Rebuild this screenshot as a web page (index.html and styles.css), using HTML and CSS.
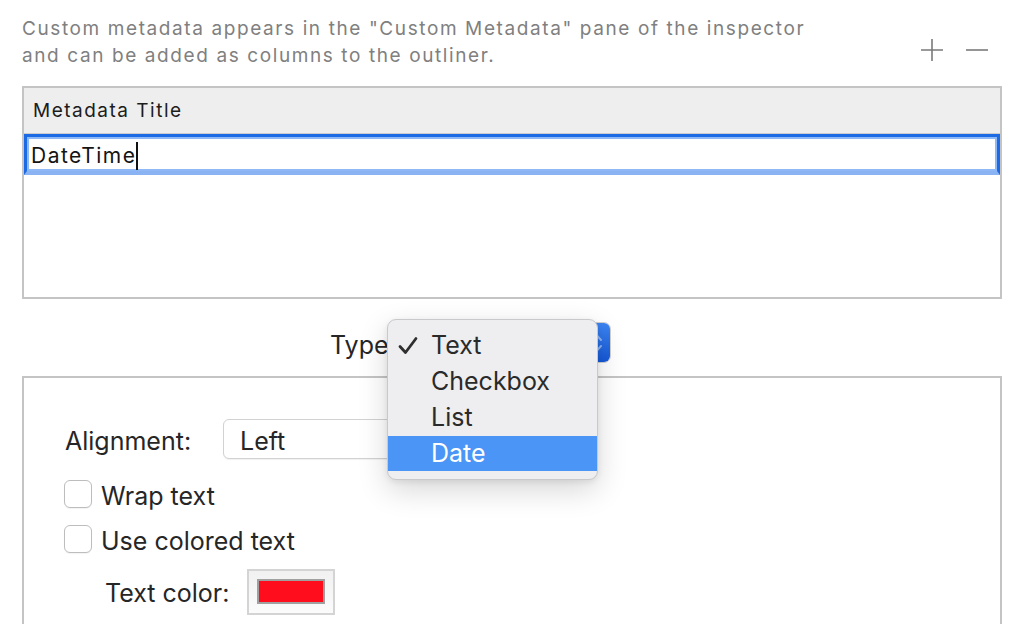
FILE: index.html
```html
<!DOCTYPE html>
<html>
<head>
<meta charset="utf-8">
<link rel="stylesheet" href="styles.css">
</head>
<body>
<div class="page">
  <div class="top">
    <p class="desc">Custom metadata appears in the "Custom Metadata" pane of the inspector<br>and can be added as columns to the outliner.</p>
    <div class="pm">
      <svg class="plus" width="24" height="24" viewBox="0 0 24 24"><path d="M12 1V23M1 12H23" stroke="#7a7a7a" stroke-width="1.6" fill="none"/></svg>
      <svg class="minus" width="24" height="24" viewBox="0 0 24 24"><path d="M1 12H23" stroke="#7a7a7a" stroke-width="1.6" fill="none"/></svg>
    </div>
  </div>

  <div class="table">
    <div class="th">Metadata Title</div>
    <div class="field"><span class="field-text">DateTime</span><span class="caret"></span></div>
    <div class="tbody"></div>
  </div>

  <div class="type-row">
    <span class="type-label">Type</span>
    <div class="popup-wrap">
      <div class="popup">
        <span class="popup-blue">
          <svg width="14" height="24" viewBox="0 0 14 24"><path d="M3 9L7 4.5L11 9M3 15L7 19.5L11 15" stroke="#8fb4f4" stroke-width="2" fill="none" stroke-linecap="round" stroke-linejoin="round"/></svg>
        </span>
      </div>
      <div class="menu">
        <div class="item"><svg class="check" width="20" height="20" viewBox="0 0 20 20"><path d="M2 10.5L7.5 16.5L18 2.5" stroke="#2f2f2f" stroke-width="2.8" fill="none" stroke-linecap="round" stroke-linejoin="round"/></svg>Text</div>
        <div class="item">Checkbox</div>
        <div class="item">List</div>
        <div class="item selected">Date</div>
      </div>
    </div>
  </div>

  <div class="panel">
    <div class="align-row">
      <span class="align-label">Alignment:</span>
      <div class="select">Left</div>
    </div>
    <div class="check-row first">
      <span class="box"></span><span class="check-text">Wrap text</span>
    </div>
    <div class="check-row">
      <span class="box"></span><span class="check-text">Use colored text</span>
    </div>
    <div class="color-row">
      <span class="color-label">Text color:</span>
      <div class="well"><div class="swatch"></div></div>
    </div>
  </div>
</div>
</body>
</html>
```

FILE: styles.css
```css
* { box-sizing: border-box; }
html, body {
  margin: 0;
  padding: 0;
  background: #ffffff;
}
body {
  width: 1026px;
  height: 624px;
  overflow: hidden;
  font-family: Inter, "Liberation Sans", sans-serif;
  color: #262626;
}
.page {
  width: 1026px;
  height: 624px;
  overflow: hidden;
}

/* top description */
.top {
  height: 86px;
  display: flex;
  align-items: flex-start;
}
.desc {
  margin: 0;
  padding: 15px 0 0 22px;
  font-size: 19px;
  line-height: 27px;
  letter-spacing: 1.6px;
  color: #808080;
  flex: 1;
}
.pm {
  display: flex;
  gap: 21px;
  margin-top: 38px;
  margin-right: 37px;
}
.pm svg { display: block; }

/* table */
.table {
  margin-left: 22px;
  width: 980px;
  height: 213px;
  border: 2px solid #c4c4c4;
  display: flex;
  flex-direction: column;
}
.th {
  height: 46px;
  background: #eeeeee;
  border-bottom: 1px solid #cdcdcd;
  padding-left: 9px;
  font-size: 19px;
  letter-spacing: 1.5px;
  line-height: 45px;
  color: #1c1c1c;
}
.field {
  height: 41px;
  border: 3px solid #1c6ae4;
  border-bottom: 4px solid #8ab3f4;
  box-shadow: inset 0 0 0 2px #8fb8f6;
  background: #ffffff;
  display: flex;
  align-items: center;
  padding-left: 4px;
  padding-top: 3px;
}
.field-text {
  font-size: 21px;
  letter-spacing: 1.5px;
  color: #141414;
}
.caret {
  width: 2px;
  height: 28px;
  background: #111;
  margin-left: -1px;
}
.tbody { flex: 1; }

/* type row */
.type-row {
  display: flex;
  align-items: center;
  padding-left: 330px;
  margin-top: 23px;
  height: 41px;
  margin-bottom: 13px;
}
.type-label {
  font-size: 25px;
  color: #262626;
  width: 63px;
  padding-top: 4px;
}
.popup-wrap {
  position: relative;
  width: 218px;
  height: 41px;
}
.popup {
  width: 218px;
  height: 41px;
  border-radius: 7px;
  background: #ffffff;
  border: 1px solid #d0d0d0;
  display: flex;
  justify-content: flex-end;
  overflow: hidden;
}
.popup-blue {
  width: 34px;
  height: 100%;
  background: linear-gradient(#3d85f2, #1558d8);
  display: flex;
  align-items: center;
  justify-content: center;
  padding-left: 8px;
}
.popup-blue svg { display: block; }

.menu {
  position: absolute;
  left: -6px;
  top: -3px;
  width: 211px;
  height: 161px;
  background: #eeeef0;
  border: 1px solid #c9c9cb;
  border-radius: 9px;
  box-shadow: 0 10px 30px rgba(0, 0, 0, 0.16), 0 2px 6px rgba(0, 0, 0, 0.08);
  padding: 7px 0 0 0;
  z-index: 10;
  overflow: hidden;
}
.item {
  height: 36px;
  line-height: 36px;
  font-size: 25px;
  color: #2a2a2a;
  padding-left: 43px;
  position: relative;
}
.item .check {
  position: absolute;
  left: 10px;
  top: 9px;
}
.item.selected {
  background: #4b95f6;
  color: #ffffff;
  margin-top: 1px;
  height: 35px;
  line-height: 35px;
}

/* lower panel */
.panel {
  margin-left: 22px;
  width: 980px;
  height: 248px;
  border: 2px solid #c4c4c4;
  border-bottom: 0;
  padding-top: 41px;
}
.align-row {
  display: flex;
  align-items: center;
  padding-left: 41px;
  height: 40px;
}
.align-label {
  font-size: 25px;
  width: 158px;
  padding-top: 4px;
}
.select {
  width: 260px;
  height: 40px;
  border: 1px solid #d2d2d2;
  border-radius: 6px;
  background: #ffffff;
  box-shadow: 0 1px 1px rgba(0,0,0,0.06);
  font-size: 25px;
  line-height: 42px;
  padding-left: 16px;
}
.check-row {
  display: flex;
  align-items: center;
  padding-left: 40px;
  height: 28px;
  margin-top: 17px;
  font-size: 25px;
  gap: 9px;
}
.check-row.first { margin-top: 21px; }
.check-text { padding-top: 3px; }
.box {
  width: 28px;
  height: 28px;
  border: 1px solid #bdbdbd;
  border-radius: 6px;
  background: #ffffff;
  box-shadow: 0 1px 1px rgba(0,0,0,0.05);
}
.color-row {
  display: flex;
  align-items: center;
  padding-left: 81px;
  margin-top: 16px;
  height: 46px;
}
.color-label {
  font-size: 25px;
  width: 142px;
  padding-top: 2px;
}
.well {
  width: 88px;
  height: 46px;
  border: 2px solid #d4d4d4;
  background: linear-gradient(#f1f1f1, #fbfbfb);
  padding: 8px 8px 9px 8px;
}
.swatch {
  width: 100%;
  height: 100%;
  border: 2px solid #a0a0a0;
  background: #ff0d1d;
}
```
